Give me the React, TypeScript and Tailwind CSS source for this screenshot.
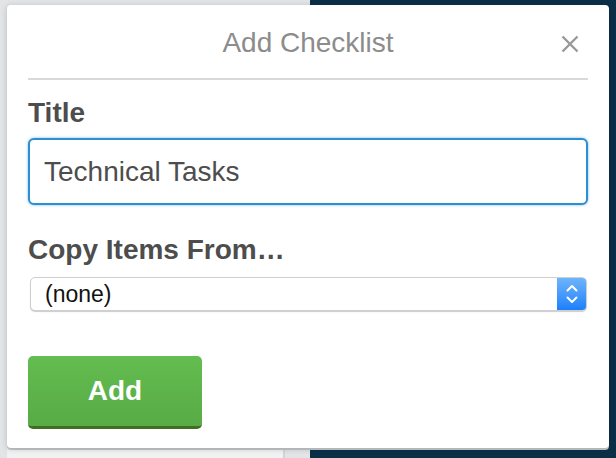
import React from "react";

export default function App() {
  return (
    <div className="relative flex h-[458px] w-[616px] overflow-hidden font-['Liberation_Sans',Arial,sans-serif]">
      {/* background board */}
      <div className="flex h-full w-[310px] flex-col justify-end bg-[#e2e4e6]">
        <div className="flex h-[11px]">
          <div className="w-[7px]" />
          <div className="w-[276px] bg-[#f1f2f2]" />
          <div className="w-[2px] bg-[#d3d6d8]" />
        </div>
      </div>
      <div className="h-full flex-1 bg-[#0c2f48]" />

      {/* popover */}
      <div className="absolute left-[7px] top-[5px] h-[443px] w-[602px] rounded-[4px] bg-white px-[21px] shadow-[0_1px_6px_rgba(0,0,0,0.18),0_2px_0_#c4c9cc]">
        <div className="relative pb-[15px] pt-[18px]">
          <h2 className="text-center text-[28px] leading-[40px] text-[#8c8c8c]">
            Add Checklist
          </h2>
          <button className="absolute right-[9px] top-[30px] h-[18px] w-[18px]">
            <svg viewBox="0 0 18 18" width="18" height="18">
              <path
                d="M1.5 1.5 L16.5 16.5 M16.5 1.5 L1.5 16.5"
                stroke="#999999"
                strokeWidth="2.4"
                strokeLinecap="butt"
                fill="none"
              />
            </svg>
          </button>
        </div>
        <div className="h-[2px] bg-[#d6dadc]" />

        <div className="mt-[17px] text-[28px] font-bold leading-[32px] text-[#4d4d4d]">
          Title
        </div>
        <input
          readOnly
          value="Technical Tasks"
          className="mt-[9px] block h-[67px] w-full rounded-[6px] border-2 border-[#2d8fd0] bg-white pl-[14px] text-[28px] text-[#4d4d4d] shadow-[0_0_3px_rgba(41,143,208,0.6)] outline-none"
        />

        <div className="mt-[29px] text-[28px] font-bold leading-[32px] text-[#4d4d4d]">
          Copy Items From…
        </div>
        <div className="ml-[2px] mt-[11px] flex h-[34px] w-[557px] overflow-hidden rounded-[5px] border border-[#cfcfcf] bg-white shadow-[0_1px_1px_rgba(0,0,0,0.2)]">
          <div className="flex flex-1 items-center pl-[14px] text-[23px] text-[#111111]">
            (none)
          </div>
          <div className="flex w-[29px] items-center justify-center bg-gradient-to-b from-[#6db4fb] to-[#1a7ffb]">
            <svg viewBox="0 0 12 22" width="12" height="22">
              <path
                d="M1.5 7.5 L6 3 L10.5 7.5 M1.5 14.5 L6 19 L10.5 14.5"
                stroke="white"
                strokeWidth="2"
                fill="none"
                strokeLinecap="round"
                strokeLinejoin="round"
              />
            </svg>
          </div>
        </div>

        <button className="mt-[45px] flex h-[73px] w-[174px] items-center justify-center rounded-[5px] border-b-[3px] border-[#3f6f21] bg-gradient-to-b from-[#63bd50] to-[#58ab45] text-[28px] font-bold text-white">
          Add
        </button>
      </div>
    </div>
  );
}
